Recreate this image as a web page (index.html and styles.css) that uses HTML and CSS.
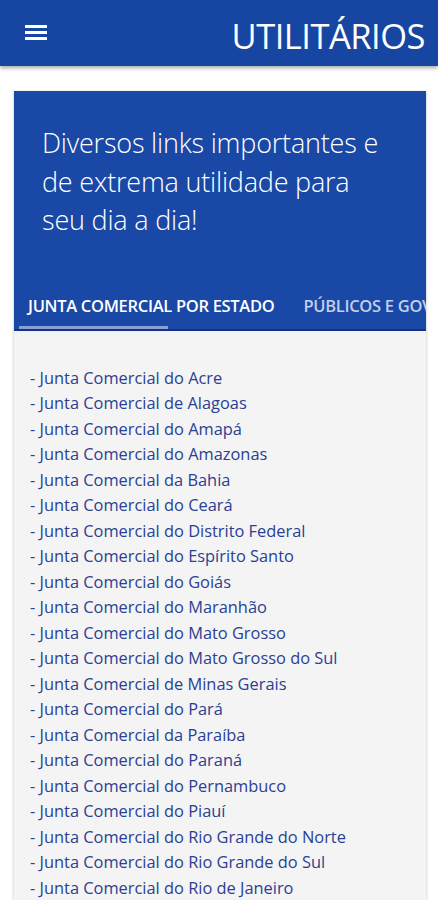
FILE: index.html
```html
<!DOCTYPE html>
<html>
<head>
    <title>Utilitários</title>
    <link rel="stylesheet" href="styles.css">
</head>
<body>
    <header class="topbar">
        <button class="menu-btn" aria-label="Menu">
            <svg width="24" height="18" viewBox="0 0 24 18">
                <rect x="1" y="2" width="22" height="3" fill="#fff"/>
                <rect x="1" y="8" width="22" height="3" fill="#fff"/>
                <rect x="1" y="14" width="22" height="3" fill="#fff"/>
            </svg>
        </button>
        <h1 class="title">UTILITÁRIOS</h1>
    </header>

    <main class="card">
        <section class="hero">
            <p class="hero-text">Diversos links importantes e de extrema utilidade para seu dia a dia!</p>
            <nav class="tabs">
                <span class="tab active">JUNTA COMERCIAL POR ESTADO</span>
                <span class="tab">PÚBLICOS E GOVERNAMENTAIS</span>
            </nav>
        </section>

        <ul class="links">
            <li><a href="#">- Junta Comercial do Acre</a></li>
            <li><a href="#">- Junta Comercial de Alagoas</a></li>
            <li><a href="#">- Junta Comercial do Amapá</a></li>
            <li><a href="#">- Junta Comercial do Amazonas</a></li>
            <li><a href="#">- Junta Comercial da Bahia</a></li>
            <li><a href="#">- Junta Comercial do Ceará</a></li>
            <li><a href="#">- Junta Comercial do Distrito Federal</a></li>
            <li><a href="#">- Junta Comercial do Espírito Santo</a></li>
            <li><a href="#">- Junta Comercial do Goiás</a></li>
            <li><a href="#">- Junta Comercial do Maranhão</a></li>
            <li><a href="#">- Junta Comercial do Mato Grosso</a></li>
            <li><a href="#">- Junta Comercial do Mato Grosso do Sul</a></li>
            <li><a href="#">- Junta Comercial de Minas Gerais</a></li>
            <li><a href="#">- Junta Comercial do Pará</a></li>
            <li><a href="#">- Junta Comercial da Paraíba</a></li>
            <li><a href="#">- Junta Comercial do Paraná</a></li>
            <li><a href="#">- Junta Comercial do Pernambuco</a></li>
            <li><a href="#">- Junta Comercial do Piauí</a></li>
            <li><a href="#">- Junta Comercial do Rio Grande do Norte</a></li>
            <li><a href="#">- Junta Comercial do Rio Grande do Sul</a></li>
            <li><a href="#">- Junta Comercial do Rio de Janeiro</a></li>
        </ul>
    </main>
</body>
</html>
```

FILE: styles.css
```css
body {
    margin: 0;
    background: #fff;
    font-family: "Open Sans", "Noto Sans", sans-serif;
    overflow: hidden;
    height: 900px;
}
.topbar {
    height: 66px;
    background: #1746a2;
    display: flex;
    align-items: center;
    justify-content: space-between;
    padding: 0 13px 0 24px;
    box-shadow: 0 2px 4px rgba(0, 0, 0, 0.35);
    position: relative;
    z-index: 2;
}
.menu-btn {
    background: none;
    border: 0;
    padding: 0;
    display: flex;
    margin-top: -2px;
}
.title {
    margin: 4px 0 0;
    color: #fff;
    font-weight: 400;
    font-size: 34.5px;
    letter-spacing: -0.5px;
}
.card {
    margin: 25px 12px 0 14px;
    background: #f4f4f4;
    box-shadow: 0 1px 3px rgba(0, 0, 0, 0.25);
}
.hero {
    background: #1a48a6;
    border-bottom: 2px solid #16308a;
    overflow: hidden;
}
.hero-text {
    margin: 0;
    padding: 33px 34px 0 28px;
    color: #fff;
    font-size: 27px;
    line-height: 38.5px;
    font-weight: 300;
    letter-spacing: -0.2px;
}
.tabs {
    display: flex;
    gap: 29px;
    margin-top: 54px;
    padding-left: 14px;
    white-space: nowrap;
}
.tab {
    color: #c3cfec;
    font-size: 16.5px;
    font-weight: 600;
    letter-spacing: -0.3px;
    padding: 0 0 12px;
}
.tab.active {
    color: #fff;
    position: relative;
}
.tab.active::after {
    content: "";
    position: absolute;
    left: -9px;
    width: 149px;
    bottom: 0;
    height: 3px;
    background: #8a9fcf;
}
.links {
    list-style: none;
    margin: 0;
    padding: 34px 16px 0;
}
.links li {
    line-height: 25.5px;
    font-size: 16.4px;
}
.links a {
    color: #2b3f93;
    text-decoration: none;
}
```
